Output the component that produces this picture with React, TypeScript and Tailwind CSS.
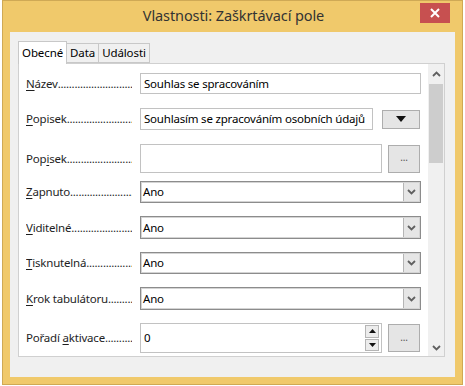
import type { JSX, ReactNode } from 'react';

const font = "font-['Noto_Sans','Open_Sans',sans-serif]";

const U = ({ children }: { children: ReactNode }) => (
  <span className="underline underline-offset-2">{children}</span>
);

const Label = ({ children }: { children: ReactNode }): JSX.Element => (
  <div className="flex w-[106px] shrink-0 overflow-hidden whitespace-nowrap text-[11.5px] tracking-[-0.2px] text-[#1e1e1e]">
    <span>{children}</span>
    <span className="overflow-hidden tracking-[-0.3px]">{'.'.repeat(60)}</span>
  </div>
);

const Chevron = ({ up = false }: { up?: boolean }) => (
  <svg width="9" height="6" viewBox="0 0 9 6" className={up ? 'rotate-180' : ''}>
    <polyline points="1,1 4.5,4.5 8,1" fill="none" stroke="#606060" strokeWidth="1.8" />
  </svg>
);

const Select = ({ value }: { value: string }): JSX.Element => (
  <div className="flex h-full w-[281px] border border-[#8c8c8c] bg-white shadow-[inset_0_0_0_1px_#d4d4d4]">
    <div className="flex flex-1 items-center pl-[2px] text-[11.5px] text-black">{value}</div>
    <div className="m-[1px] flex w-[16px] items-center justify-center border-l border-[#b5b5b5] bg-[#e6e6e6]">
      <Chevron />
    </div>
  </div>
);

const DotsButton = ({ h }: { h: string }): JSX.Element => (
  <div className={`flex w-[32px] items-center justify-center border border-[#adadad] bg-[#e5e5e5] pb-[2px] text-[10px] text-[#555] ${h}`}>
    ...
  </div>
);

export default function App(): JSX.Element {
  return (
    <div className={`h-[386px] w-[465px] bg-white pl-[2px] ${font}`}>
      <div className="flex h-[385px] w-[461px] flex-col border border-[#cfa955] bg-[#f0c96b] px-[7px] pb-[7px]">
        {/* title bar */}
        <div className="relative flex h-[31px] shrink-0 items-center justify-center">
          <span className="pb-[1px] pl-[2px] text-[14.5px] tracking-[-0.1px] text-[#333]">Vlastnosti: Zaškrtávací pole</span>
          <div className="absolute right-[5px] top-[2px] flex h-[20px] w-[30px] items-center justify-center bg-[#c75050]">
            <svg width="10" height="10" viewBox="0 0 10 10">
              <path d="M1 1 L9 9 M9 1 L1 9" stroke="white" strokeWidth="2" />
            </svg>
          </div>
        </div>

        {/* dialog body */}
        <div className="flex flex-1 flex-col bg-[#f0f0f0] pl-[8px] pr-[10px] pb-[20px] pt-[9px]">
          {/* tabs */}
          <div className="relative z-10 flex h-[22px] items-end text-[11.5px] tracking-[-0.1px] text-black">
            <div className="-mb-px flex h-[23px] items-start border border-b-0 border-[#c8c8c8] bg-white px-[3px] pt-[2px]">
              Obecné
            </div>
            <div className="flex h-[20px] items-center border border-l-0 border-[#c8c8c8] bg-[#f0f0f0] px-[3px]">
              Data
            </div>
            <div className="flex h-[20px] items-center border border-l-0 border-[#c8c8c8] bg-[#f0f0f0] px-[3px]">
              Události
            </div>
          </div>

          {/* pane */}
          <div className="flex flex-1 border border-[#d0d0d0] bg-white">
            <div className="flex flex-1 flex-col pl-[7px] pr-[7px] text-[11.5px] tracking-[-0.2px]">
              <div className="mt-[9px] flex h-[21px] items-center">
                <Label>
                  <U>N</U>ázev
                </Label>
                <div className="ml-[8px] flex h-full w-[281px] items-center border border-[#c2c2c2] pl-[3px] text-black">
                  Souhlas se spracováním
                </div>
              </div>

              <div className="mt-[14px] flex h-[22px] items-center">
                <Label>
                  <U>P</U>opisek
                </Label>
                <div className="ml-[8px] flex h-full w-[233px] items-center overflow-hidden whitespace-nowrap border border-[#c2c2c2] pl-[3px] text-black">
                  Souhlasím se zpracováním osobních údajů
                </div>
                <div className="ml-[9px] flex h-[19px] w-[38px] items-center justify-center border border-[#adadad] bg-[#e5e5e5]">
                  <svg width="10" height="6" viewBox="0 0 10 6">
                    <path d="M0 0 H10 L5 6 Z" fill="#111" />
                  </svg>
                </div>
              </div>

              <div className="mt-[14px] flex h-[29px] items-center">
                <Label>
                  Pop<U>i</U>sek
                </Label>
                <div className="ml-[8px] h-full w-[242px] border border-[#c2c2c2]" />
                <div className="ml-[6px]">
                  <DotsButton h="h-[28px]" />
                </div>
              </div>

              <div className="mt-[8px] flex h-[22px] items-center">
                <Label>
                  <U>Z</U>apnuto
                </Label>
                <div className="ml-[8px] h-full">
                  <Select value="Ano" />
                </div>
              </div>

              <div className="mt-[13px] flex h-[23px] items-center">
                <Label>
                  <U>V</U>iditelné
                </Label>
                <div className="ml-[8px] h-full">
                  <Select value="Ano" />
                </div>
              </div>

              <div className="mt-[13px] flex h-[22px] items-center">
                <Label>
                  <U>T</U>isknutelná
                </Label>
                <div className="ml-[8px] h-full">
                  <Select value="Ano" />
                </div>
              </div>

              <div className="mt-[13px] flex h-[23px] items-center">
                <Label>
                  <U>K</U>rok tabulátoru
                </Label>
                <div className="ml-[8px] h-full">
                  <Select value="Ano" />
                </div>
              </div>

              <div className="mt-[13px] flex h-[30px] items-center">
                <Label>
                  Pořadí <U>a</U>ktivace
                </Label>
                <div className="ml-[8px] flex h-full w-[242px] items-center border border-[#c2c2c2] pl-[3px] pr-[2px] text-black">
                  <span className="flex-1">0</span>
                  <div className="flex h-[26px] w-[14px] flex-col gap-[1px]">
                    <div className="flex flex-1 items-center justify-center border border-[#b5b5b5] bg-[#ececec]">
                      <svg width="7" height="4" viewBox="0 0 7 4">
                        <path d="M0 4 H7 L3.5 0 Z" fill="#111" />
                      </svg>
                    </div>
                    <div className="flex flex-1 items-center justify-center border border-[#b5b5b5] bg-[#ececec]">
                      <svg width="7" height="4" viewBox="0 0 7 4">
                        <path d="M0 0 H7 L3.5 4 Z" fill="#111" />
                      </svg>
                    </div>
                  </div>
                </div>
                <div className="ml-[6px]">
                  <DotsButton h="h-[28px]" />
                </div>
              </div>
            </div>

            {/* scrollbar */}
            <div className="flex w-[16px] flex-col bg-[#f0f0f0]">
              <div className="flex h-[19px] items-center justify-center">
                <Chevron up />
              </div>
              <div className="mx-[1px] mt-[1px] h-[79px] bg-[#cdcdcd]" />
              <div className="flex-1" />
              <div className="flex h-[17px] items-center justify-center">
                <Chevron />
              </div>
            </div>
          </div>
        </div>
      </div>
    </div>
  );
}
